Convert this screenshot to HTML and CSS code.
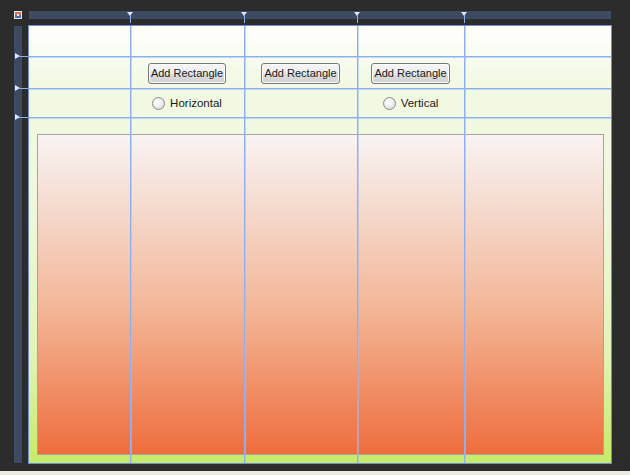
FILE: index.html
```html
<!DOCTYPE html>
<html>
<head>
  <meta charset="UTF-8">
  <title>Designer</title>
  <link rel="stylesheet" href="styles.css">
</head>
<body>
  <div class="designer">
    <div class="top-row">
      <svg class="corner-icon" width="8" height="8" viewBox="0 0 8 8">
        <rect x="0" y="0" width="8" height="8" fill="#e8e8e8"/>
        <rect x="1" y="1" width="6" height="3" fill="#d0705a"/>
        <rect x="1" y="4" width="6" height="3" fill="#4a6fb0"/>
        <rect x="3" y="3" width="2" height="2" fill="#f0f0f0"/>
      </svg>
      <div class="ruler-top">
        <span class="mark-down" style="left: 98px"></span>
        <span class="mark-down" style="left: 212px"></span>
        <span class="mark-down" style="left: 325px"></span>
        <span class="mark-down" style="left: 432px"></span>
      </div>
    </div>
    <div class="main-row">
      <div class="ruler-left">
        <span class="mark-right" style="top: 27px"></span>
        <span class="mark-right" style="top: 59px"></span>
        <span class="mark-right" style="top: 88px"></span>
      </div>
      <div class="surface">
        <div class="cell c2 r2"><button class="wpf-btn">Add Rectangle</button></div>
        <div class="cell c3 r2"><button class="wpf-btn">Add Rectangle</button></div>
        <div class="cell c4 r2"><button class="wpf-btn">Add Rectangle</button></div>
        <div class="cell c2 r3"><label class="radio"><span class="dot"></span>Horizontal</label></div>
        <div class="cell c4 r3"><label class="radio"><span class="dot"></span>Vertical</label></div>
        <div class="canvas-rect"></div>

        <div class="guides">
          <span class="vline" style="left: 101px"></span>
          <span class="vline" style="left: 215px"></span>
          <span class="vline" style="left: 328px"></span>
          <span class="vline" style="left: 435px"></span>
          <span class="hline" style="top: 30px"></span>
          <span class="hline" style="top: 62px"></span>
          <span class="hline" style="top: 91px"></span>
        </div>
      </div>
    </div>
  </div>
  <div class="status-strip"></div>
  <span class="edge-mark"></span>
</body>
</html>
```

FILE: styles.css
```css
body {
  margin: 0;
  padding: 0;
  width: 630px;
  height: 475px;
  background: #2c2c2c;
  font-family: 'Liberation Sans', Arial, sans-serif;
  position: relative;
  overflow: hidden;
}
.designer {
  height: 471px;
  padding: 11px 0 0 14px;
  box-sizing: border-box;
  display: flex;
  flex-direction: column;
  gap: 6px;
}
.top-row {
  display: flex;
  align-items: flex-start;
  gap: 7px;
  height: 8px;
}
.corner-icon {
  display: block;
  flex: 0 0 8px;
}
.ruler-top {
  position: relative;
  width: 582px;
  height: 8px;
  background: #3d4a62;
}
.mark-down {
  position: absolute;
  top: 1px;
  width: 0;
  height: 0;
  border-left: 3px solid transparent;
  border-right: 3px solid transparent;
  border-top: 4px solid #d8e6ff;
}
/* guide continues from the marker down to the surface */
.mark-down::after {
  content: '';
  position: absolute;
  left: 0;
  top: -1px;
  width: 1px;
  height: 8px;
  background: #8eaef2;
}
.main-row {
  display: flex;
  align-items: flex-start;
  gap: 6px;
}
.ruler-left {
  position: relative;
  width: 8px;
  height: 437px;
  margin-top: 1px;
  background: #3d4a62;
}
.mark-right {
  position: absolute;
  left: 1px;
  width: 0;
  height: 0;
  border-top: 3px solid transparent;
  border-bottom: 3px solid transparent;
  border-left: 5px solid #d8e6ff;
}
.mark-right::after {
  content: '';
  position: absolute;
  left: -1px;
  top: 0;
  width: 13px;
  height: 1px;
  background: #8eaef2;
}
.surface {
  position: relative;
  width: 582px;
  height: 437px;
  border: 1px solid #6f8fd0;
  background: linear-gradient(#ffffff 0%, #f2f9e4 12%, #eef7da 45%, #e2f3b8 75%, #c6ea68 100%);
  display: grid;
  grid-template-columns: 101px 114px 113px 107px 1fr;
  grid-template-rows: 30px 32px 29px 1fr;
}
.cell {
  display: flex;
  align-items: center;
  justify-content: center;
}
.c2 { grid-column: 2; }
.c3 { grid-column: 3; }
.c4 { grid-column: 4; }
.r2 { grid-row: 2; padding-top: 2px; }
.r3 { grid-row: 3; }
.wpf-btn {
  font-family: 'Liberation Sans', Arial, sans-serif;
  font-size: 11px;
  color: #1a1a1a;
  height: 21px;
  padding: 0 2px;
  border: 1px solid #777;
  border-radius: 3px;
  background: linear-gradient(#f6f6f6 0%, #ebebeb 50%, #dddddd 51%, #d2d2d2 100%);
  box-shadow: inset 0 0 0 1px #fcfcfc;
}
.radio {
  display: flex;
  align-items: center;
  gap: 5px;
  font-size: 11.5px;
  color: #1a1a1a;
  padding-top: 1px;
}
.dot {
  width: 11px;
  height: 11px;
  border-radius: 50%;
  border: 1px solid #8a8a8a;
  background: radial-gradient(circle at 40% 35%, #ffffff 0%, #f0f0f0 40%, #cfcfcf 100%);
}
.canvas-rect {
  grid-column: 1 / -1;
  grid-row: 4;
  margin: 17px 7px 8px 8px;
  border: 1px solid #a5a5a0;
  background: linear-gradient(#f9f3f3 0%, #f5ddd2 20%, #f3b596 55%, #ee6e3e 100%);
}
.guides {
  position: absolute;
  inset: 0;
  pointer-events: none;
}
.vline {
  position: absolute;
  top: 0;
  bottom: 0;
  width: 1px;
  background: #8eaef2;
  box-shadow: 1px 0 0 rgba(160, 190, 245, 0.6);
}
.hline {
  position: absolute;
  left: 0;
  right: 0;
  height: 1px;
  background: #8eaef2;
  box-shadow: 0 1px 0 rgba(160, 190, 245, 0.6);
}
.status-strip {
  height: 4px;
  background: #ecebdf;
}
.edge-mark {
  position: absolute;
  left: 625px;
  top: 459px;
  width: 1px;
  height: 11px;
  background: #5a1020;
}
```
